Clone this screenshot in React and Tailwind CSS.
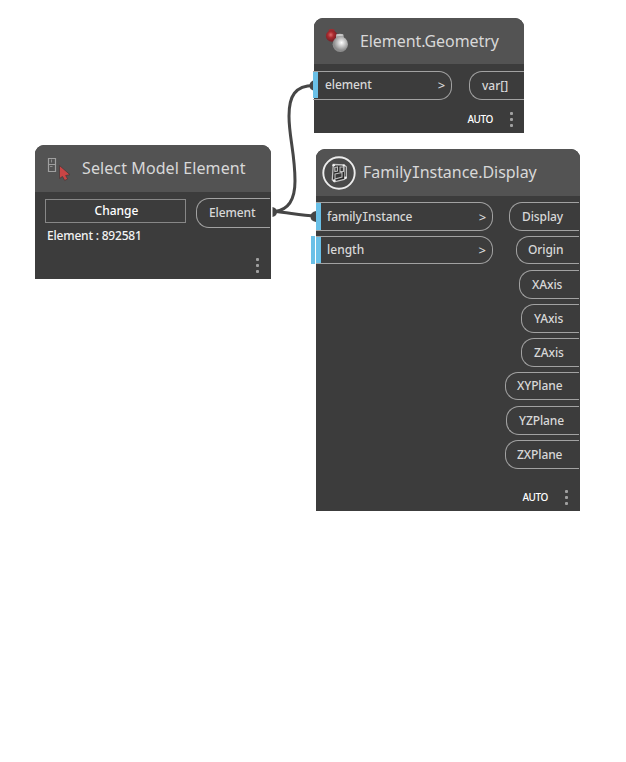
const FONT = "font-['Noto_Sans','Open_Sans',sans-serif]";

function Dots({ className = '' }) {
  return (
    <div className={`flex w-[3px] shrink-0 flex-col gap-[3px] ${className}`}>
      <i className="size-[3px] rounded-[1px] bg-[#a0a0a0]" />
      <i className="size-[3px] rounded-[1px] bg-[#a0a0a0]" />
      <i className="size-[3px] rounded-[1px] bg-[#a0a0a0]" />
    </div>
  );
}

function Node({ className, headerClass = 'h-[47px]', header, children }) {
  return (
    <section className={`absolute flex flex-col rounded-t-[9px] bg-[#3c3c3c] text-[#d8d8d8] ${className}`}>
      <header className={`flex shrink-0 items-center rounded-t-[9px] bg-[#535353] ${headerClass}`}>{header}</header>
      {children}
    </section>
  );
}

function Title({ className, children }) {
  return <h2 className={`whitespace-nowrap text-[16px] leading-[22px] ${className}`}>{children}</h2>;
}

function InPort({ className, labelClass = 'ml-[6px]', children }) {
  return (
    <div className={`flex items-stretch rounded-r-[13px] border-y border-r border-[#a2a2a2] text-[12px] font-medium leading-[16px] ${className}`}>
      <b className="w-[5px] shrink-0 bg-[#6ac0e7]" />
      <span className={`flex-1 self-center whitespace-nowrap ${labelClass}`}>{children}</span>
      <span className="mr-[6px] self-center text-[13px]">&gt;</span>
    </div>
  );
}

function OutPort({ className, children }) {
  return (
    <div className={`flex items-center rounded-l-[13px] border-y border-l border-[#a2a2a2] text-[12px] font-medium leading-[16px] ${className}`}>
      <span className="whitespace-nowrap">{children}</span>
    </div>
  );
}

function SelectIcon() {
  return (
    <svg className="ml-[11px] shrink-0" width="26" height="27" viewBox="0 0 26 27">
      <path d="M2.500 3.500h7v13h-7zM2.500 9.500h7" fill="none" stroke="#a0a0a0" strokeWidth="1.2" />
      <path d="M4 11.500h2.500M5.500 4.500v3" fill="none" stroke="#8c8c8c" />
      <path d="M13.500 10.500v13l3-2 2.200 4 3-1.500-2-3.500 4.300-.8z" fill="#ca4545" stroke="#493a3a" strokeWidth=".8" />
    </svg>
  );
}

function GeometryIcon() {
  return (
    <svg className="ml-[11px] shrink-0" width="26" height="26" viewBox="0 0 26 26">
      <defs>
        <radialGradient id="red" cx=".42" cy=".4">
          <stop stopColor="#dc6c6c" /><stop offset=".5" stopColor="#a92a2e" /><stop offset="1" stopColor="#7c2228" />
        </radialGradient>
        <radialGradient id="silver" cx=".58" cy=".4">
          <stop stopColor="#fff" /><stop offset=".4" stopColor="#d2d2d2" /><stop offset="1" stopColor="#8d8d8d" />
        </radialGradient>
      </defs>
      <path d="M3.800 1.600q3-1.200 5.600 0l.4 4h-6.200z" fill="#a42b2f" />
      <circle cx="6.700" cy="8" r="5.800" fill="url(#red)" />
      <path d="M11 6.700q4-1.700 7.500 0l.5 5h-8z" fill="#a5a5a5" />
      <ellipse cx="14.800" cy="6.900" rx="3.500" ry="1" fill="#c8c8c8" />
      <circle cx="15.300" cy="16.200" r="7.700" fill="url(#silver)" />
    </svg>
  );
}

function DisplayIcon() {
  return (
    <svg className="ml-[6px] shrink-0" width="34" height="34" viewBox="0 0 34 34">
      <circle cx="17" cy="17" r="15.700" fill="#4a4a4a" stroke="#ececec" strokeWidth="1.900" />
      <path d="M11.300 8.500l10.700.5 2.300 1.800v10.700l-2 1.800-10 2.500-2-2z" fill="#262626" stroke="#c4c4c4" strokeWidth="1.300" />
      <path d="M12.800 11.500l2.700-.5v4l-2.700.500zM18 11h3.500v4.500h-3.500zM13 18l7-1.500v4.500l-7 2z" fill="#383838" stroke="#bdbdbd" strokeWidth="1.100" />
      <path d="M22.500 10.500v11" stroke="#8f8f8f" />
      <g fill="#f0f0f0"><circle cx="11.700" cy="9.200" r="1.300" /><circle cx="21.800" cy="9.600" r="1.200" /><circle cx="23.500" cy="21.700" r="1.300" /><circle cx="12.300" cy="24.600" r="1.400" /></g>
    </svg>
  );
}

function Wires() {
  return (
    <svg className="absolute inset-0" width="626" height="762" viewBox="0 0 626 762">
      <g fill="none" stroke="#464646" strokeWidth="3">
        <path d="M275 211.500C287 210 295 201 295 181C295 154 289 137 289 116C289 96 295 85.500 314 85.500" />
        <path d="M275 211.500C288 212.500 300 215.500 316 216.200" />
      </g>
      <g fill="#464646">
        <path d="M272.500 207q4.500 1 4.500 5t-4.500 5z" />
        <path d="M315 80q-5.500 1-5.500 5.500t5.500 5.500z" />
        <path d="M316 211q-5.500 1-5.500 5.500t5.500 5.500z" />
      </g>
    </svg>
  );
}

const SerifI = () => <span className="font-['DejaVu_Sans_Mono',monospace] text-[0.96em] font-normal -tracking-[0.06em]">I</span>;

const outputs = [
  ['Display', 'h-[29px] w-[70px] pl-[12px]'],
  ['Origin', 'mt-[5px] h-[28px] w-[63px] pl-[11px]'],
  ['XAxis', 'mt-[6px] h-[29px] w-[60px] pl-[12px]'],
  ['YAxis', 'mt-[5px] h-[29px] w-[58px] pl-[12px]'],
  ['ZAxis', 'mt-[5px] h-[29px] w-[58px] pl-[12px]'],
  ['XYPlane', 'mt-[5px] h-[28px] w-[74px] pl-[11px]'],
  ['YZPlane', 'mt-[6px] h-[29px] w-[73px] pl-[12px]'],
  ['ZXPlane', 'mt-[5px] h-[29px] w-[74px] pl-[11px]'],
];

export default function App() {
  return (
    <main className={`relative h-[762px] w-[626px] overflow-hidden bg-white ${FONT}`}>
      <Wires />

      <Node
        className="left-[35px] top-[145px] h-[134px] w-[236px]"
        header={<><SelectIcon /><Title className="-mt-[2px] ml-[10px] tracking-[0.1px]">Select Model Element</Title></>}
      >
        <div className="flex items-start pt-[6px]">
          <div className="ml-[10px] w-[141px] pt-px">
            <button className="block h-[24px] w-full border border-[#878787] pb-[2px] pl-[2px] text-[12px] font-medium leading-[19px] text-white">Change</button>
            <p className="ml-[2px] mt-[5px] whitespace-nowrap text-[12px] font-medium leading-[16px] -tracking-[0.2px] text-[#f2f2f2]">Element : 892581</p>
          </div>
          <OutPort className="ml-[10px] h-[30px] w-[74px] pl-[12px] -tracking-[0.1px]">Element</OutPort>
        </div>
        <Dots className="mb-[6px] ml-[221px] mt-auto" />
      </Node>

      <Node
        className="left-[314px] top-[18px] h-[115px] w-[210px]"
        headerClass="h-[46px]"
        header={<><GeometryIcon /><Title className="ml-[9px] -tracking-[0.08px]">Element.Geometry</Title></>}
      >
        <div className="-ml-px mt-[7px] flex justify-between">
          <InPort className="h-[29px] w-[139px] pb-px -tracking-[0.1px]" labelClass="ml-[7px]">element</InPort>
          <OutPort className="h-[29px] w-[55px] pl-[12px]">var[]</OutPort>
        </div>
        <footer className="mt-[12px] flex items-center justify-end pr-[11px]">
          <span className="mr-[17px] text-[10px] font-medium leading-[15px] -tracking-[0.4px] text-white">AUTO</span>
          <Dots />
        </footer>
      </Node>

      <Node
        className="left-[316px] top-[149px] h-[362px] w-[264px]"
        header={<><DisplayIcon /><Title className="ml-[7px] -tracking-[0.05px]">Family<SerifI />nstance.Display</Title></>}
      >
        <div className="mt-[6px] flex justify-between pr-px">
          <div className="flex flex-col gap-[5px]">
            <InPort className="h-[29px] w-[177px] -tracking-[0.1px]">family<SerifI />nstance</InPort>
            <div className="relative">
              <i className="absolute -left-[5px] top-0 h-[28px] w-[4px] bg-[#6ac0e7]" />
              <InPort className="h-[28px] w-[177px]">length</InPort>
            </div>
          </div>
          <div className="flex flex-col items-end -tracking-[0.1px]">
            {outputs.map(([label, className]) => (
              <OutPort key={label} className={className}>{label}</OutPort>
            ))}
          </div>
        </div>
        <footer className="mt-auto flex items-center justify-end pb-[6px] pr-[12px]">
          <span className="mr-[17px] text-[10px] font-medium leading-[15px] -tracking-[0.4px] text-white">AUTO</span>
          <Dots />
        </footer>
      </Node>
    </main>
  );
}
